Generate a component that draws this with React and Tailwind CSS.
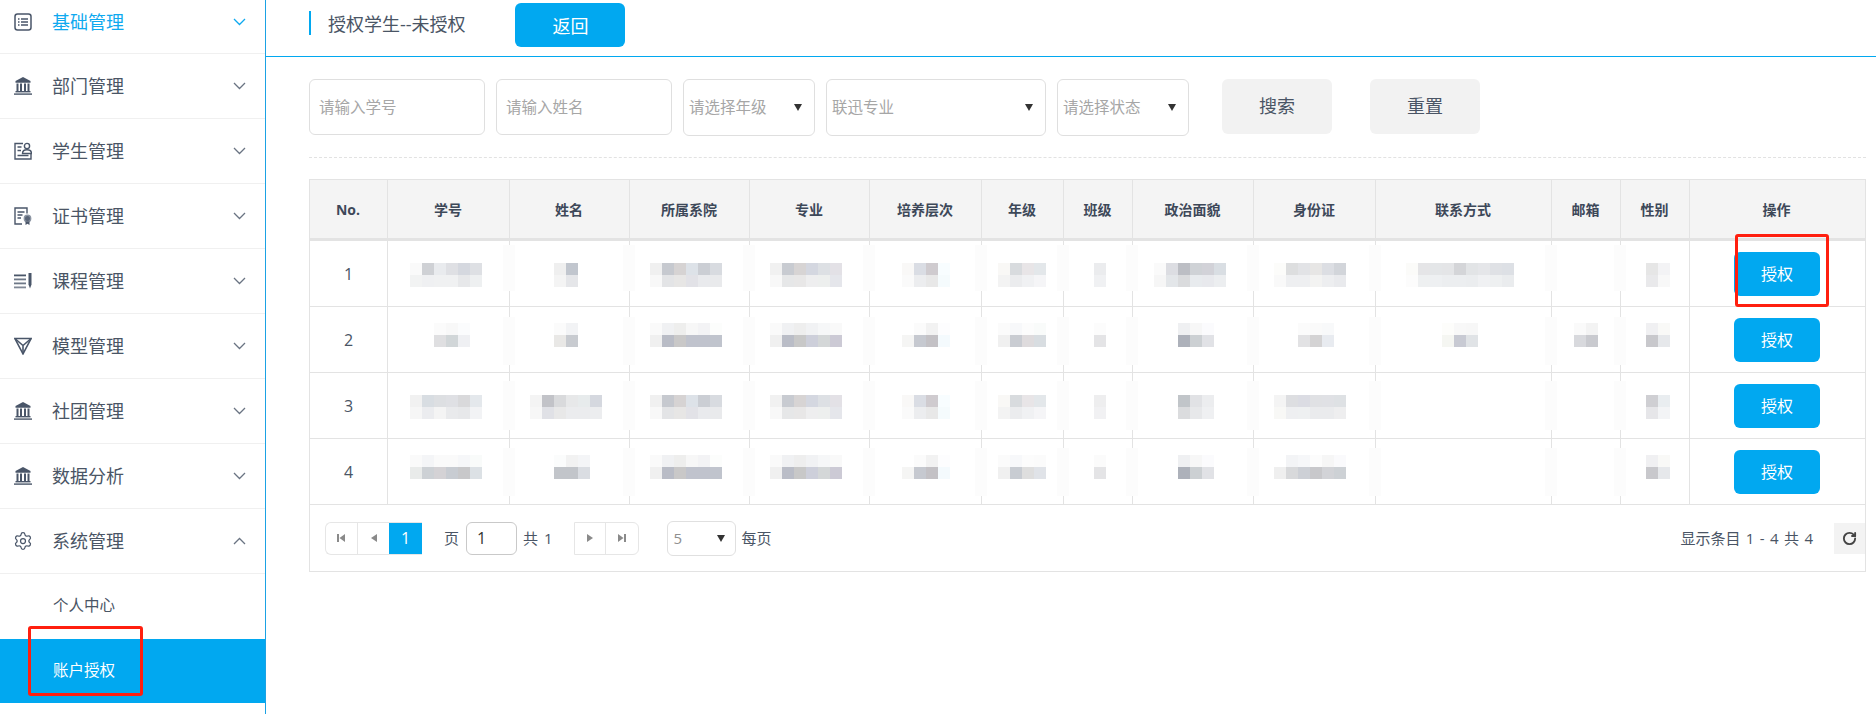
import React from "react";
import { RotateCw, Settings } from "lucide-react";

const IconList = () => (
  <svg width="18" height="18" viewBox="0 0 18 18" fill="none" stroke="#4a5669">
    <rect x="1" y="1" width="16" height="16" rx="2.5" strokeWidth="1.5" />
    <path d="M4 6h1.5M7 6h7M4 9h1.5M7 9h7M4 12h1.5M7 12h7" strokeWidth="1.3" />
  </svg>
);

const IconBank = () => (
  <svg width="18" height="18" viewBox="0 0 18 18" fill="#4a5669">
    <path d="M9 0 16.5 4V5.800h-15V4Z" />
    <rect x="2.500" y="6.500" width="2" height="7.500" />
    <rect x="6" y="6.500" width="2" height="7.500" />
    <rect x="10" y="6.500" width="2" height="7.500" />
    <rect x="13.500" y="6.500" width="2" height="7.500" />
    <rect x="1.500" y="14" width="15" height="1.400" />
    <rect x="0" y="16.400" width="18" height="1.400" />
  </svg>
);

const IconStudent = () => (
  <svg width="18" height="18" viewBox="0 0 18 18" fill="none" stroke="#4a5669" strokeWidth="1.4">
    <path d="M9 1.500H1v15.500h16v-5" />
    <circle cx="13" cy="4" r="2.600" />
    <path d="M8.500 11.500c0-5 9-5 9 0z" />
    <path d="M3.500 5h4M3.500 8.500h3.500M3.500 13.500h11" />
  </svg>
);

const IconCert = () => (
  <svg width="18" height="18" viewBox="0 0 18 18" fill="none" stroke="#4a5669" strokeWidth="1.4">
    <path d="M13 6.500V1H1v16h7" />
    <path d="M3.500 5h7M3.500 8h5M3.500 11h3.500" />
    <circle cx="13.500" cy="11.500" r="3.200" fill="#5a6577" stroke="#8c95a3" />
    <path d="M11.500 14.500V18l2-1.200 2 1.200v-3.500z" fill="#4a5669" stroke="none" />
  </svg>
);

const IconCourse = () => (
  <svg width="18" height="18" viewBox="0 0 18 18" fill="#4a5669">
    <rect x="0" y="2.500" width="12" height="1.800" />
    <rect x="0" y="6.500" width="12" height="1.800" opacity="0.8" />
    <rect x="0" y="10.500" width="12" height="1.800" opacity="0.8" />
    <rect x="0" y="14.500" width="12" height="1.800" opacity="0.7" />
    <path d="M14.500 1h3v11.500L16 16.500l-1.500-4z" />
  </svg>
);

const IconModel = () => (
  <svg width="18" height="18" viewBox="0 0 18 18" fill="none" stroke="#4a5669" strokeWidth="1.6">
    <path d="M.9 1.500h16.200L9 16.900z" />
    <path d="M.9 1.500 9 8.500l8.100-7M9 8.500v8.400" />
  </svg>
);

const Chevron = ({ up, blue }) => (
  <svg width="13" height="8" viewBox="0 0 13 8" fill="none" stroke={blue ? "#0ea9ef" : "#6a7483"} strokeWidth="1.300">
    <path d={up ? "M1 7l5.500-5.500L12 7" : "M1 1l5.500 5.500L12 1"} />
  </svg>
);

const menu = [
  { name: "部门管理", icon: <IconBank /> },
  { name: "学生管理", icon: <IconStudent /> },
  { name: "证书管理", icon: <IconCert /> },
  { name: "课程管理", icon: <IconCourse /> },
  { name: "模型管理", icon: <IconModel /> },
  { name: "社团管理", icon: <IconBank /> },
  { name: "数据分析", icon: <IconBank /> },
];

const Sidebar = () => (
  <div className="w-[266px] shrink-0 border-r border-[#1ba2e4] text-[18px] text-[#4a5565]">
    <div className="flex h-[54px] items-center border-b border-[#f0f0f0] pb-[9px] pl-[14px] pr-[19px]">
      <IconList />
      <span className="ml-[20px] text-[#0ea9ef]">基础管理</span>
      <span className="ml-auto">
        <Chevron blue />
      </span>
    </div>
    {menu.map((m) => (
      <div key={m.name} className="flex h-[65px] items-center border-b border-[#f0f0f0] pl-[14px] pr-[19px]">
        {m.icon}
        <span className="ml-[20px]">{m.name}</span>
        <span className="ml-auto">
          <Chevron />
        </span>
      </div>
    ))}
    <div className="flex h-[65px] items-center border-b border-[#f0f0f0] pl-[13px] pr-[19px]">
      <Settings size={20} strokeWidth={1.5} color="#4a5669" />
      <span className="ml-[19px]">系统管理</span>
      <span className="ml-auto">
        <Chevron up />
      </span>
    </div>
    <div className="flex h-[65px] items-center pb-[2px] pl-[53px] text-[15.500px]">个人中心</div>
    <div className="flex h-[64px] items-center bg-[#01a8f0] pl-[53px] text-[15.500px] text-white">账户授权</div>
  </div>
);

const Caret = () => (
  <svg width="8" height="7" viewBox="0 0 8 7" fill="#333333">
    <path d="M0 0h8L4 7z" />
  </svg>
);

const SelectBox = ({ text, width }) => (
  <div className={`flex h-[57px] shrink-0 items-center justify-between rounded-md border border-[#dfdfdf] pl-[5px] pr-[12px] text-[15.500px] text-[#a6a6a6] ${width}`}>
    <span>{text}</span>
    <Caret />
  </div>
);

const columns = [
  { name: "No.", w: "w-[78px]", left: 310 },
  { name: "学号", w: "w-[122px]", left: 388 },
  { name: "姓名", w: "w-[120px]", left: 510 },
  { name: "所属系院", w: "w-[120px]", left: 630 },
  { name: "专业", w: "w-[120px]", left: 750 },
  { name: "培养层次", w: "w-[112px]", left: 870 },
  { name: "年级", w: "w-[82px]", left: 982 },
  { name: "班级", w: "w-[69px]", left: 1064 },
  { name: "政治面貌", w: "w-[121px]", left: 1133 },
  { name: "身份证", w: "w-[122px]", left: 1254 },
  { name: "联系方式", w: "w-[176px]", left: 1376 },
  { name: "邮箱", w: "w-[69px]", left: 1552 },
  { name: "性别", w: "w-[69px]", left: 1621 },
  { name: "操作", w: "w-[175px]", left: 1690 },
];

// blurred values, each one drawn as two rows of 12px squares
const s1dept = { x: 650, t: ["f0f0f0", "c6c9cf", "d6d3d3", "dde2e8", "cbced4", "d8dbe0"], b: ["f8f8f8", "e3e4e6", "e7e6e5", "e2e2e7", "e9eaed", "e9eaec"] };
const s1major = { x: 770, t: ["f1f1f1", "c8cbd1", "d7d4d4", "d4d7e0", "dde0e4", "e3e1e6"], b: ["f8f8f8", "e6e7e8", "e8e7e7", "eeeeef", "edefee", "e5e6eb"] };
const s1level = { x: 902, t: ["f9f8f7", "dadde4", "cfcbcf", "f8fdff"], b: ["fafafa", "ecedef", "e8e8e8", "f5fbfd"] };
const s1grade = { x: 998, t: ["f9f8f6", "d8dbde", "e8e5e7", "e3e7ea"], b: ["f3f3f3", "ebecee", "f0f1f3", "f5f5f7"] };
const s2dept = { x: 650, t: ["fafafa", "f0f1f3", "eeeeed", "f7f7f7", "f3f3f5", "fcfdfc"], b: ["f0f0f0", "b9bcc6", "c9c8c8", "c0c3cd", "c0c3cd", "c0c4cd"] };
const s2major = { x: 770, t: ["fafafa", "f0f1f3", "eeeeee", "f1f2f4", "f6f7f8", "f9f9f9"], b: ["f0f0f0", "babdc7", "c8c8c8", "cdcfda", "d4d7d8", "cccad5"] };
const s2level = { x: 902, t: ["ffffff", "fbfbfb", "f2f2f2", "fdfdfe"], b: ["f5f5f4", "c6c9d0", "c3c1c5", "f4fafd"] };
const s2face = { x: 1178, t: ["eff0f2", "f7f7f7", "fbfbfd"], b: ["adb1ba", "ccd0d3", "e1e2e6"] };
const s2sex = { x: 1646, t: ["f0f0f2", "f9f9f7"], b: ["c8c8cc", "e6e8eb"] };

const rows = [
  {
    no: 1,
    pad: "pt-[22px]",
    halo: "top-[4px] h-[46px]",
    cells: [
      { x: 410, t: ["fafafa", "cfd1d5", "e9ebee", "dfe0e4", "d5d8df", "dee0e4"], b: ["f2f3f3", "eff0f2", "f0f1f2", "f0f1f2", "e7e8ea", "eef0f1"] },
      { x: 554, t: ["efefef", "c1c6ce"], b: ["f4f4f4", "e5e6e9"] },
      s1dept,
      s1major,
      s1level,
      s1grade,
      { x: 1094, t: ["ebecee"], b: ["f0f1f3"] },
      { x: 1154, t: ["fafafa", "dcdde2", "bcbec4", "cfd2d6", "d2d2d8", "d9dee3"], b: ["f6f6f6", "e3e6e9", "dadbdd", "e8ebee", "e8e9ed", "eceef0"] },
      { x: 1274, t: ["fcfcfa", "dddedf", "e2e3e6", "e7e6e5", "dcdee3", "d2d5da"], b: ["f9f9f9", "eeeff1", "eeeff1", "f3f3f2", "edeef0", "e9eaed"] },
      { x: 1406, t: ["fbfbf9", "e5e5e7", "e4e6e8", "e4e5e7", "d4d5d8", "e2e4e6", "e5e6e9", "dfe1e5", "dde0e5"], b: ["fcfcfc", "eef0f1", "eef0f2", "eceef0", "eceef0", "ebedef", "f0f1f3", "eef0f1", "eaecee"] },
      null,
      { x: 1646, t: ["e6e6e6", "f3f3f5"], b: ["e9e9eb", "f8f8f8"] },
    ],
  },
  {
    no: 2,
    pad: "pt-[16px]",
    halo: "top-[10px] h-[48px]",
    cells: [
      { x: 434, t: ["fbfbfb", "f8f8f8", "fbfcfd"], b: ["dfdfe1", "d1d6d8", "eff0f3"] },
      { x: 554, t: ["fbfbfb", "f2f3f5"], b: ["e9e8e6", "c8cbd0"] },
      s2dept,
      s2major,
      s2level,
      { x: 998, t: ["fbfbfb", "f7f8fa", "fcfcfc", "f9fbfa"], b: ["f0f0f0", "c9ccd2", "dedbdd", "d8dde1"] },
      { x: 1094, t: ["fcfcfc"], b: ["e4e4e6"] },
      s2face,
      { x: 1298, t: ["fbfbfb", "fafafa", "f8f9fa"], b: ["e2e2e4", "d4d3d4", "e8ebf0"] },
      { x: 1442, t: ["fdfdfb", "f8f8f8", "f7f7f7"], b: ["f5f6f2", "c8cad3", "e0e3e6"] },
      { x: 1574, t: ["fafafa", "f3f3f3"], b: ["d8d9dd", "c9cacf"] },
      s2sex,
    ],
  },
  {
    no: 3,
    pad: "pt-[22px]",
    halo: "top-[8px] h-[49px]",
    cells: [
      { x: 410, t: ["f1f1f1", "d8dde2", "dddfe2", "dfe0e4", "d9d9db", "e4e8ec"], b: ["f6f6f6", "ebecef", "f4f4f4", "e9eaec", "e7e8ea", "f2f3f5"] },
      { x: 530, t: ["f4f4f4", "c2c3c8", "d9dadc", "e7e8e9", "e7ebec", "d5d8df"], b: ["f7f7f7", "e0e1e6", "e8e8e8", "ebecee", "ebecee", "ecedef"] },
      s1dept,
      s1major,
      s1level,
      s1grade,
      { x: 1094, t: ["eeeeef"], b: ["f1f1f3"] },
      { x: 1178, t: ["c1c5c9", "e1e2e5", "ecedef"], b: ["dbdcde", "e7e8ea", "eff0f2"] },
      { x: 1274, t: ["f4f4f4", "dddee1", "dbdce3", "e0e1e4", "e0e1e5", "dee1e4"], b: ["f8f8f6", "eeeff1", "eef0f1", "eaebed", "eaebed", "eeeeef"] },
      null,
      null,
      { x: 1646, t: ["cfcfd3", "e9edf0"], b: ["e6e6e9", "f3f4f6"] },
    ],
  },
  {
    no: 4,
    pad: "pt-[16px]",
    halo: "top-[9px] h-[48px]",
    cells: [
      { x: 410, t: ["fafafa", "f4f5f7", "fafafa", "fafafa", "f6f7f9", "f9fbfa"], b: ["e9ebea", "cdd1d5", "d4d2d5", "c8ccd2", "c8c8ca", "dce1e5"] },
      { x: 554, t: ["fbfcfc", "f2f2f2", "f4f5f7"], b: ["c2c5ca", "c2c5ca", "dadde2"] },
      s2dept,
      s2major,
      s2level,
      { x: 998, t: ["fbfbfb", "f7f8fa", "fcfcfc", "fbfbfb"], b: ["f0f0f0", "c8ccd2", "dedede", "e0e3e8"] },
      { x: 1094, t: ["fbfbfb"], b: ["e4e4e6"] },
      s2face,
      { x: 1274, t: ["ffffff", "f3f4f6", "f6f7f9", "fcfcfc", "f6f6f6", "fafafc"], b: ["efefef", "d8d9db", "cdd0d6", "c8c8cb", "d2d3d7", "cdd1d5"] },
      null,
      null,
      s2sex,
    ],
  },
];

const Mosaic = ({ data, left }) => (
  <svg
    className="block"
    width={data.t.length * 12}
    height="24"
    shapeRendering="crispEdges"
    style={{ marginLeft: data.x - left }}
  >
    {data.t.map((c, i) => (
      <rect key={i} x={i * 12} y="0" width="12" height="12" fill={`#${c}`} />
    ))}
    {data.b.map((c, i) => (
      <rect key={i} x={i * 12} y="12" width="12" height="12" fill={`#${c}`} />
    ))}
  </svg>
);

const PagerIcon = ({ d }) => (
  <svg width="10" height="10" viewBox="0 0 10 10" fill="#8a8a8a">
    <path d={d} />
  </svg>
);

const Pager = () => (
  <div className="flex h-[66px] items-center pl-[15px] text-[15px] text-[#4a5565]">
    <div className="flex h-[33px] w-[97px] overflow-hidden rounded-l-md border border-r-0 border-[#e6e6e6]">
      <div className="flex w-[32px] items-center justify-center border-r border-[#e6e6e6]">
        <PagerIcon d="M1 1h2v8H1zM9 1v8L3.500 5z" />
      </div>
      <div className="flex w-[32px] items-center justify-center">
        <PagerIcon d="M8 1v8L2 5z" />
      </div>
      <div className="flex w-[33px] items-center justify-center bg-[#01a8f0] text-[16px] text-white">1</div>
    </div>
    <span className="ml-[22px]">页</span>
    <div className="ml-[7px] flex h-[33px] w-[51px] items-center rounded-md border border-[#c9c9c9] pl-[10px] text-[16px] text-[#333333]">1</div>
    <span className="ml-[6px] [word-spacing:2px]">共 1</span>
    <div className="ml-[21px] flex h-[33px] w-[65px] rounded-r-md border border-[#e6e6e6]">
      <div className="flex w-[32px] items-center justify-center border-r border-[#e6e6e6]">
        <PagerIcon d="M2 1v8l6-4z" />
      </div>
      <div className="flex w-[32px] items-center justify-center">
        <PagerIcon d="M1 1v8l5.500-4zM7 1h2v8H7z" />
      </div>
    </div>
    <div className="ml-[28px] flex h-[35px] w-[69px] items-center justify-between rounded-md border border-[#e0e0e0] pl-[6px] pr-[10px] text-[#8f8f8f]">
      <span>5</span>
      <Caret />
    </div>
    <span className="ml-[6px]">每页</span>
    <span className="ml-auto [word-spacing:1.500px]">显示条目 1 - 4 共 4</span>
    <div className="ml-[21px] flex h-[31px] w-[31px] items-center justify-center bg-[#f3f3f3]">
      <RotateCw size={15} strokeWidth={3} color="#444444" />
    </div>
  </div>
);

export default function App() {
  return (
    <div className="relative flex h-[714px] w-[1876px] overflow-hidden bg-white font-['Open_Sans','Noto_Sans_CJK_SC',sans-serif]">
      <Sidebar />
      <div className="min-w-0 flex-1">
        <div className="flex h-[57px] items-start border-b border-[#01a8f0] pl-[43px]">
          <div className="mt-[11px] h-[24px] w-[2px] bg-[#01a8f0]" />
          <div className="ml-[17px] mt-[12px] text-[18px] leading-[24px] text-[#4a5565]">授权学生--未授权</div>
          <button className="ml-[49px] mt-[3px] h-[44px] w-[110px] rounded-md bg-[#01a8f0] pl-[2px] pt-[3px] text-[18px] text-white">返回</button>
        </div>

        <div className="pl-[43px] pr-[10px]">
          <div className="flex items-start gap-[11px] pt-[22px]">
            <input
              className="h-[56px] w-[176px] rounded-md border border-[#dfdfdf] pl-[9px] text-[15.500px] outline-none placeholder:text-[#a6a6a6]"
              placeholder="请输入学号"
            />
            <input
              className="h-[56px] w-[176px] rounded-md border border-[#dfdfdf] pl-[9px] text-[15.500px] outline-none placeholder:text-[#a6a6a6]"
              placeholder="请输入姓名"
            />
            <SelectBox text="请选择年级" width="w-[132px]" />
            <SelectBox text="联迅专业" width="w-[220px]" />
            <SelectBox text="请选择状态" width="w-[132px]" />
            <button className="ml-[22px] h-[55px] w-[110px] rounded-md bg-[#f2f2f2] text-[18px] text-[#4a5565]">搜索</button>
            <button className="ml-[27px] h-[55px] w-[110px] rounded-md bg-[#f2f2f2] text-[18px] text-[#4a5565]">重置</button>
          </div>
          <div className="mt-[21px] border-b border-dashed border-[#e2e2e2]" />

          <div className="mt-[21px] border border-[#e3e3e3]">
            <table className="w-full table-fixed border-separate border-spacing-0">
              <thead>
                <tr>
                  {columns.map((c, i) => (
                    <th
                      key={c.name}
                      className={`h-[61px] border-b-[3px] border-[#e3e3e3] bg-[#f4f4f4] p-0 text-[14px] font-bold text-[#3d4859] ${c.w} ${i < 13 ? "border-r pr-[1px]" : "pr-[2px]"}`}
                    >
                      {c.name}
                    </th>
                  ))}
                </tr>
              </thead>
              <tbody>
                {rows.map((r) => (
                  <tr key={r.no}>
                    <td className="h-[66px] border-b border-r border-[#e3e3e3] p-0 text-center text-[16px] text-[#4a5565]">{r.no}</td>
                    {r.cells.map((cell, i) => (
                      <td key={i} className={`relative border-b border-r border-[#e3e3e3] p-0 align-top ${r.pad}`}>
                        {i > 0 && <span className={`absolute left-[-7px] w-[12px] bg-[#fcfcfc] ${r.halo}`} />}
                        {cell && <Mosaic data={cell} left={columns[i + 1].left} />}
                      </td>
                    ))}
                    <td className="border-b border-[#e3e3e3] p-0 align-top">
                      <button className="ml-[44px] mt-[11px] block h-[44px] w-[86px] rounded-md bg-[#01a8f0] text-[16px] text-white">授权</button>
                    </td>
                  </tr>
                ))}
              </tbody>
            </table>
            <Pager />
          </div>
        </div>
      </div>

      <div className="absolute left-[28px] top-[626px] h-[70px] w-[115px] rounded-[3px] border-[3px] border-[#ff1f0f]" />
      <div className="absolute left-[1735px] top-[234px] h-[73px] w-[94px] rounded-[3px] border-[3px] border-[#ff1f0f]" />
    </div>
  );
}
